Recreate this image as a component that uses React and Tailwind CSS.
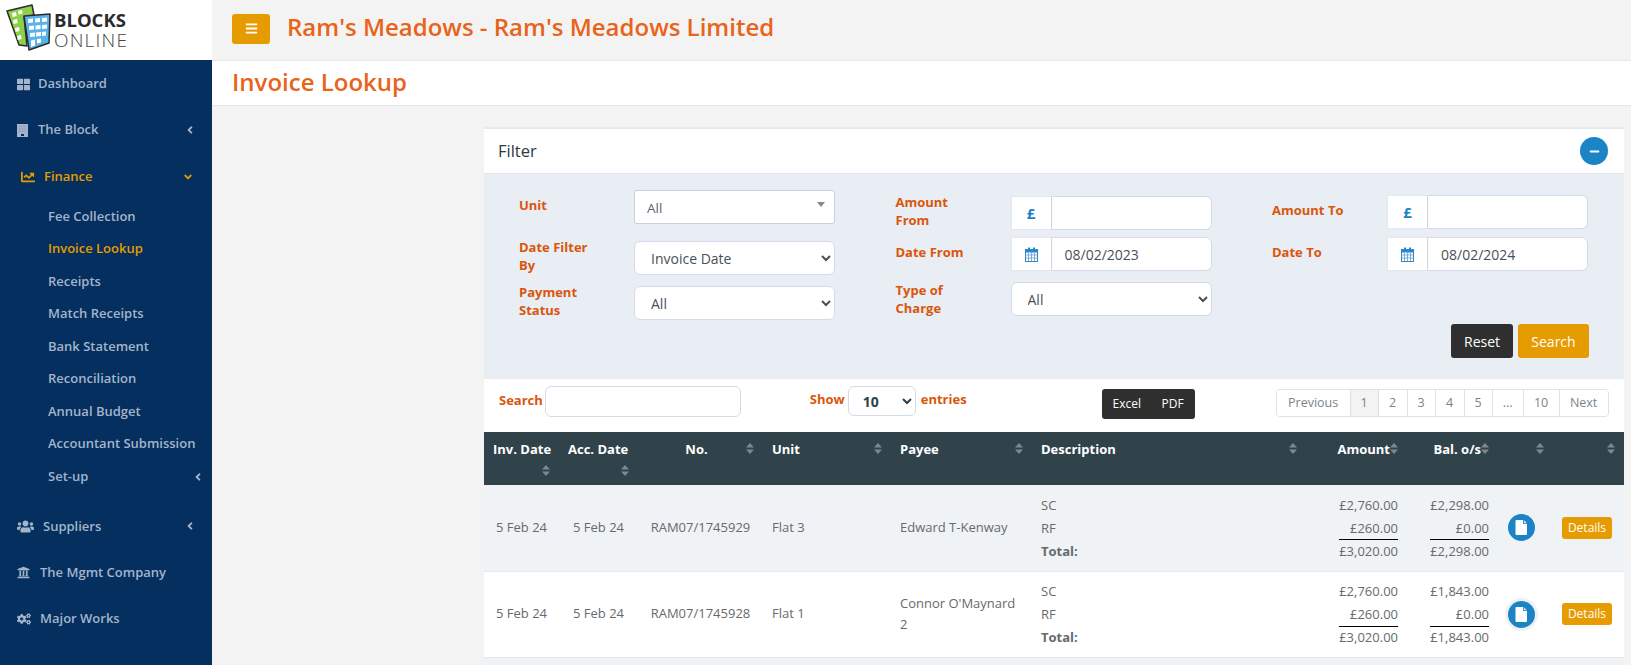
import {
  FaAngleDown,
  FaAngleLeft,
  FaBars,
  FaChartLine,
  FaCogs,
  FaMinus,
  FaThLarge,
  FaUniversity,
  FaUsers,
} from "react-icons/fa";

const subMenu = [
  { label: "Fee Collection" },
  { label: "Invoice Lookup", active: true },
  { label: "Receipts" },
  { label: "Match Receipts" },
  { label: "Bank Statement" },
  { label: "Reconciliation" },
  { label: "Annual Budget" },
  { label: "Accountant Submission" },
  { label: "Set-up", arrow: true },
];

const rows = [
  {
    no: "RAM07/1745929",
    unit: "Flat 3",
    payee: "Edward T-Kenway",
    bal: ["£2,298.00", "£0.00", "£2,298.00"],
    stripe: true,
  },
  {
    no: "RAM07/1745928",
    unit: "Flat 1",
    payee: "Connor O'Maynard 2",
    bal: ["£1,843.00", "£0.00", "£1,843.00"],
    ring: true,
  },
];

function Logo() {
  return (
    <div className="h-[60px] bg-white flex items-center pl-[6px] shrink-0">
      <svg width="46" height="48" viewBox="0 0 46 48" className="shrink-0 -mt-[4px]">
        <path d="M1 7 L26 1 L28 11 L18 13 L21 42 L13 41 Z" fill="#8ed04b" stroke="#2b2b2b" strokeWidth="1.5" strokeLinejoin="round" />
        <path d="M18 12 L44 10 L43 39 L23 46 Z" fill="#58b2ee" stroke="#2b2b2b" strokeWidth="1.5" strokeLinejoin="round" />
        <g fill="#ffffff">
          <path d="M6 9l4-1 .6 4-4 1zM12 7l4-1 .6 3.500-4 1zM7 16l4-1 .6 4-4 1zM9 24l4-1 .6 4-4 1zM11 32l4-1 .6 4-4 1z" />
          <path d="M22 15l5-.4v4l-5 .4zM29 14.500l5-.4v4l-5 .4zM36 14l5-.4v4l-5 .4zM23 22l5-.4v4l-5 .4zM29.500 21.500l5-.4v4l-5 .4zM36 21l5-.4v4l-5 .4zM24 29l5-.4v4l-5 .4zM30 28.500l5-.4v4l-5 .4zM36 28l4-.4v4l-4 .4zM25 36.500l4-1v6l-4 1.500zM31 35l4-.5v4l-4 1z" />
        </g>
      </svg>
      <div className="ml-[2px] flex flex-col font-['Open_Sans',sans-serif]">
        <span className="text-[18.500px] leading-[21px] font-bold text-[#2b2b2b]">BLOCKS</span>
        <span className="text-[19px] leading-[21px] font-light tracking-[1.200px] text-[#444444]">ONLINE</span>
      </div>
    </div>
  );
}

function BuildingIcon() {
  return (
    <svg width="11" height="13" viewBox="0 0 11 13" fill="#a3b4cb" className="shrink-0">
      <path d="M0 0 H11 V13 H0 Z" />
      <path d="M2 2h1.500v1H2zM4.700 2h1.500v1H4.700zM7.500 2H9v1H7.500zM2 4.500h1.500v1H2zM4.700 4.500h1.500v1H4.700zM7.500 4.500H9v1H7.500zM2 7h1.500v1H2zM4.700 7h1.500v1H4.700zM7.500 7H9v1H7.500z" fill="#8298b8" />
      <path d="M4 10h3v2H4z" fill="#042f5e" />
    </svg>
  );
}

function CalendarIcon() {
  return (
    <svg width="13" height="15" viewBox="0 0 13 15" className="shrink-0">
      <rect x="0.500" y="2.500" width="12" height="12" fill="#ffffff" stroke="#2a86c8" />
      <rect x="0.500" y="2.500" width="12" height="3" fill="#2a86c8" />
      <rect x="3" y="0.500" width="2" height="3.500" fill="#2a86c8" />
      <rect x="8" y="0.500" width="2" height="3.500" fill="#2a86c8" />
      <path d="M0.500 8 H12.500 M0.500 11 H12.500 M3.500 5.500 V14.500 M6.500 5.500 V14.500 M9.500 5.500 V14.500" stroke="#5aa0d4" strokeWidth="0.8" />
    </svg>
  );
}

function NavItem({ icon, label, textGap, arrow, active, height = "h-[46px]", pl = "pl-[17px]" }) {
  return (
    <div className={`${height} ${pl} pr-[16px] flex items-center ${active ? "text-[#e69b00]" : "text-[#a3b4cb]"}`}>
      {icon}
      <span className={`${textGap} text-[13px] font-semibold`}>{label}</span>
      {arrow === "left" && <FaAngleLeft className="ml-auto text-[12px]" />}
      {arrow === "down" && <FaAngleDown className="ml-auto mr-[2px] text-[12px]" />}
    </div>
  );
}

function Sidebar() {
  return (
    <aside className="w-[212px] shrink-0 bg-[#042f5e] flex flex-col">
      <Logo />
      <nav className="pt-[1px]">
        <NavItem icon={<FaThLarge className="text-[13px]" />} label="Dashboard" textGap="ml-[8px]" />
        <NavItem icon={<BuildingIcon />} label="The Block" textGap="ml-[10px]" arrow="left" />
        <NavItem icon={<FaChartLine className="text-[14px]" />} label="Finance" textGap="ml-[9px]" arrow="down" active pl="pl-[21px]" height="h-[47px]" />
        <div className="flex flex-col pb-[10px]">
          {subMenu.map((item) => (
            <div
              key={item.label}
              className={`h-[32.550px] pl-[48px] pr-[8px] flex items-center text-[13px] font-semibold ${
                item.active ? "text-[#e69b00]" : "text-[#a3b4cb]"
              }`}
            >
              {item.label}
              {item.arrow && <FaAngleLeft className="ml-auto text-[12px]" />}
            </div>
          ))}
        </div>
        <NavItem icon={<FaUsers className="text-[17px]" />} label="Suppliers" textGap="ml-[9px]" arrow="left" height="h-[47px]" />
        <NavItem icon={<FaUniversity className="text-[13px]" />} label="The Mgmt Company" textGap="ml-[10px]" />
        <NavItem icon={<FaCogs className="text-[14px]" />} label="Major Works" textGap="ml-[9px]" />
      </nav>
    </aside>
  );
}

function Label({ children, lift = "mb-[4px]" }) {
  return (
    <label className={`w-[115px] shrink-0 pr-[39px] ${lift} text-[13px] leading-[18.500px] font-bold text-[#d9560b]`}>
      {children}
    </label>
  );
}

function Addon({ children, value }) {
  return (
    <div className="flex h-[34px] w-[201px]">
      <div className="w-[41px] shrink-0 bg-white border border-[#e3e8f0] border-r-[#ccd5e4] flex items-center justify-center text-[#1b7fc2]">
        {children}
      </div>
      <input
        readOnly
        value={value}
        className="flex-1 min-w-0 bg-white border border-l-0 border-[#d4dbe8] rounded-r-[6px] pl-[13px] text-[14px] text-[#495057] outline-none"
      />
    </div>
  );
}

function Pound() {
  return <span className="text-[15px] font-bold">£</span>;
}

function FormSelect({ children }) {
  return (
    <select className="w-[201px] h-[34px] bg-white border border-[#d4dbe8] rounded-[6px] pl-[12px] pr-[4px] text-[14px] text-[#495057] outline-none">
      {children}
    </select>
  );
}

function FilterPanel() {
  return (
    <div className="bg-[#e9edf4] h-[205px] pl-[35px] pr-[34px]">
      <div className="grid grid-cols-[317px_317px_317px] gap-x-[59.500px]">
        <div className="flex flex-col pt-[16px]">
          <div className="flex items-center h-[34px]">
            <Label>Unit</Label>
            <div className="w-[201px] h-[34px] bg-white border border-[#c6d0de] rounded-[3px] flex items-center justify-between pl-[12px] pr-[9px] text-[13.500px] text-[#5b6670]">
              <span className="pt-[2px]">All</span>
              <span className="w-0 h-0 -mt-[5px] border-x-[4px] border-x-transparent border-t-[5px] border-t-[#888888]" />
            </div>
          </div>
          <div className="flex items-center h-[34px] mt-[17px]">
            <Label>Date Filter By</Label>
            <FormSelect>
              <option>Invoice Date</option>
            </FormSelect>
          </div>
          <div className="flex items-center h-[34px] mt-[11px]">
            <Label>Payment Status</Label>
            <FormSelect>
              <option>All</option>
            </FormSelect>
          </div>
        </div>

        <div className="flex flex-col pt-[22px]">
          <div className="flex items-center h-[34px]">
            <Label>Amount From</Label>
            <Addon value="">
              <Pound />
            </Addon>
          </div>
          <div className="flex items-center h-[34px] mt-[7px]">
            <Label>Date From</Label>
            <Addon value="08/02/2023">
              <CalendarIcon />
            </Addon>
          </div>
          <div className="flex items-center h-[34px] mt-[11px]">
            <Label lift="">Type of Charge</Label>
            <FormSelect>
              <option>All</option>
            </FormSelect>
          </div>
        </div>

        <div className="flex flex-col pt-[21px]">
          <div className="flex items-center h-[34px]">
            <Label>Amount To</Label>
            <Addon value="">
              <Pound />
            </Addon>
          </div>
          <div className="flex items-center h-[34px] mt-[8px]">
            <Label>Date To</Label>
            <Addon value="08/02/2024">
              <CalendarIcon />
            </Addon>
          </div>
          <div className="flex justify-end gap-[5px] mt-[53px]">
            <button className="w-[62px] h-[34px] rounded-[3px] bg-[#2f2f2f] text-white text-[14px]">Reset</button>
            <button className="w-[71px] h-[34px] rounded-[3px] bg-[#e69b00] text-white text-[14px]">Search</button>
          </div>
        </div>
      </div>
    </div>
  );
}

const pages = [
  { label: "Previous", w: "w-[73px]" },
  { label: "1", w: "w-[28px]", current: true },
  { label: "2", w: "w-[29px]" },
  { label: "3", w: "w-[28px]" },
  { label: "4", w: "w-[29px]" },
  { label: "5", w: "w-[28px]" },
  { label: "...", w: "w-[31px]" },
  { label: "10", w: "w-[36px]" },
  { label: "Next", w: "w-[49px]" },
];

function Toolbar() {
  return (
    <div className="h-[53px] bg-white flex items-start pl-[15px] text-[13px]">
      <span className="font-bold text-[#d9560b] mt-[12px]">Search</span>
      <input className="w-[196px] h-[31px] mt-[7px] ml-[2px] border border-[#d4dbe8] rounded-[6px] outline-none" />
      <span className="font-bold text-[#d9560b] ml-[69px] mt-[11px]">Show</span>
      <select className="w-[68px] h-[30px] mt-[7px] ml-[3px] pl-[10px] bg-white border border-[#d4dbe8] rounded-[6px] text-[14px] font-bold text-[#2f4048] outline-none">
        <option>10</option>
      </select>
      <span className="font-bold text-[#d9560b] ml-[5px] mt-[11px]">entries</span>
      <div className="ml-[135px] mt-[10px] w-[93px] h-[30px] rounded-[3px] bg-[#2f2f2f] text-white text-[12px] flex items-center justify-between px-[11px]">
        <span>Excel</span>
        <span>PDF</span>
      </div>
      <div className="ml-[81px] mt-[10px] h-[28px] flex border border-[#dee2e6] rounded-[4px] text-[12.500px] text-[#7b838a] overflow-hidden">
        {pages.map((page, i) => (
          <div
            key={page.label}
            className={`${page.w} pt-[1px] flex items-center justify-center ${i > 0 ? "border-l border-[#dee2e6]" : ""} ${
              page.current ? "bg-[#f3f3f3]" : "bg-white"
            }`}
          >
            {page.label}
          </div>
        ))}
      </div>
    </div>
  );
}

function SortIcon({ className = "" }) {
  return (
    <svg width="8" height="11" viewBox="0 0 8 11" className={`shrink-0 mt-[3px] ${className}`} fill="#7b8a90">
      <path d="M4 0 L8 4.500 H0 Z M4 11 L0 6.500 H8 Z" />
    </svg>
  );
}

function HeaderCell({ children, mode = "left", wrap, pad = "px-[9px]" }) {
  return (
    <th className={`h-[53px] ${pad} pt-[8px] align-top font-bold text-left`}>
      <div className={`flex ${wrap ? "flex-wrap" : ""} ${mode === "right" ? "justify-end" : "justify-between"}`}>
        <span className={`whitespace-nowrap ${mode === "center" ? "flex-1 text-center" : ""}`}>{children}</span>
        <SortIcon className={wrap ? "ml-auto mt-[5px]" : ""} />
      </div>
    </th>
  );
}

function FileButton({ ring }) {
  return (
    <div className={`w-[27px] h-[27px] rounded-full bg-[#1b84c7] flex items-center justify-center mx-auto ${ring ? "ring-[3px] ring-[#f0f0f0]" : ""}`}>
      <svg width="12" height="15" viewBox="0 0 12 15">
        <path d="M0.500 1 Q0.500 0 1.500 0 H8 V4 H12 V14 Q12 15 11 15 H1.500 Q0.500 15 0.500 14 Z" fill="#ffffff" />
        <path d="M8.800 0 L12 3.200 H8.800 Z" fill="#cfe4f5" />
      </svg>
    </div>
  );
}

function Stack({ values }) {
  return (
    <div className="flex flex-col items-end pt-[2px]">
      <div className="h-[23px] flex items-center">{values[0]}</div>
      <div className="h-[23px] w-[59px] flex items-center justify-end border-b border-black">{values[1]}</div>
      <div className="h-[23px] flex items-center">{values[2]}</div>
    </div>
  );
}

function InvoiceTable() {
  return (
    <table className="w-full table-fixed border-collapse text-[13px]">
      <colgroup>
        <col className="w-[75px]" />
        <col className="w-[79px]" />
        <col className="w-[125px]" />
        <col className="w-[128px]" />
        <col className="w-[141px]" />
        <col className="w-[274px]" />
        <col className="w-[92px]" />
        <col className="w-[91px]" />
        <col className="w-[64px]" />
        <col />
      </colgroup>
      <thead className="bg-[#30434b] text-white">
        <tr>
          <HeaderCell wrap>Inv. Date</HeaderCell>
          <HeaderCell wrap>Acc. Date</HeaderCell>
          <HeaderCell mode="center">No.</HeaderCell>
          <HeaderCell>Unit</HeaderCell>
          <HeaderCell>Payee</HeaderCell>
          <HeaderCell>Description</HeaderCell>
          <HeaderCell mode="right" pad="pl-[9px]">Amount</HeaderCell>
          <HeaderCell mode="right" pad="pl-[9px]">Bal. o/s</HeaderCell>
          <HeaderCell />
          <HeaderCell />
        </tr>
      </thead>
      <tbody className="text-[#676a6c]">
        {rows.map((row) => (
          <tr key={row.no} className={`border-b border-[#e4e8ec] ${row.stripe ? "bg-[#eff3f6]" : "bg-white"}`}>
            <td className="h-[86px] px-[9px] text-center">5 Feb 24</td>
            <td className="px-[9px] text-center">5 Feb 24</td>
            <td className="px-[9px] text-center">{row.no}</td>
            <td className="px-[9px]">{row.unit}</td>
            <td className="px-[9px] leading-[21px]">{row.payee}</td>
            <td className="px-[9px] pt-[2px]">
              <div className="h-[23px] flex items-center">SC</div>
              <div className="h-[23px] flex items-center">RF</div>
              <div className="h-[23px] flex items-center font-bold">Total:</div>
            </td>
            <td>
              <Stack values={["£2,760.00", "£260.00", "£3,020.00"]} />
            </td>
            <td>
              <Stack values={row.bal} />
            </td>
            <td>
              <FileButton ring={row.ring} />
            </td>
            <td>
              <button className="block ml-auto mr-[12px] w-[50px] h-[22px] rounded-[3px] bg-[#e69b00] text-white text-[12px]">Details</button>
            </td>
          </tr>
        ))}
      </tbody>
    </table>
  );
}

export default function App() {
  return (
    <div className="w-[1631px] h-[665px] overflow-hidden flex bg-[#f3f3f3] font-['Open_Sans',sans-serif]">
      <Sidebar />
      <main className="flex-1 flex flex-col min-w-0">
        <header className="h-[61px] shrink-0 border-b border-[#e7e7e7] flex items-center pl-[20px]">
          <button className="w-[38px] h-[30px] rounded-[3px] bg-[#e69b00] text-white flex items-center justify-center -mt-[3px]">
            <FaBars className="text-[13px]" />
          </button>
          <h1 className="ml-[17px] text-[24px] font-semibold text-[#e8641b] -mt-[7px]">Ram's Meadows - Ram's Meadows Limited</h1>
        </header>
        <div className="h-[45px] shrink-0 bg-white border-b border-[#e7e7e7] pl-[20px] flex items-center">
          <h2 className="text-[24px] font-semibold text-[#e8641b] -mt-[2px]">Invoice Lookup</h2>
        </div>
        <section className="ml-[272px] mr-[7px] mt-[21px] border-t-2 border-[#e7eaec]">
          <div className="h-[45px] bg-white border-b border-[#e4e8ee] flex items-center justify-between pl-[14px] pr-[16px]">
            <span className="text-[16.500px] font-medium text-[#2b3a42]">Filter</span>
            <span className="w-[28px] h-[28px] rounded-full bg-[#1b84c7] text-white flex items-center justify-center">
              <FaMinus className="text-[11px]" />
            </span>
          </div>
          <FilterPanel />
          <Toolbar />
          <InvoiceTable />
          <div className="h-[10px] bg-[#eff3f6]" />
        </section>
      </main>
    </div>
  );
}
